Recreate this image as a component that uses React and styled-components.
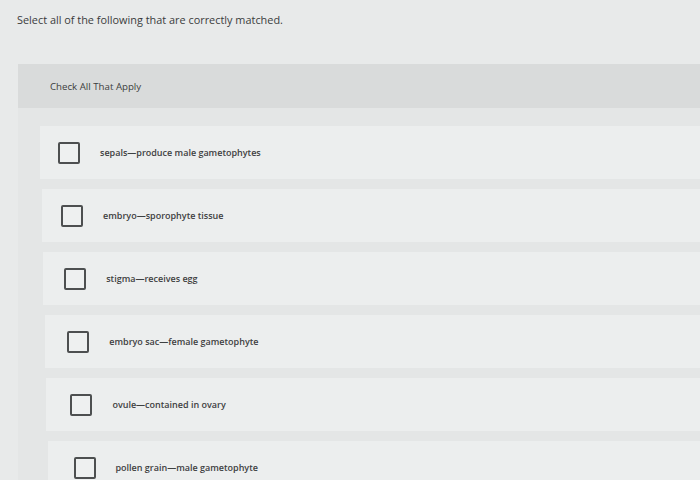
import React from "react";
import styled, { createGlobalStyle } from "styled-components";

const Global = createGlobalStyle`
  html, body { margin: 0; padding: 0; background: #e8eaea; }
  body { font-family: "Open Sans", "Liberation Sans", sans-serif; }
`;

const Page = styled.div`
  width: 700px;
  height: 480px;
  overflow: hidden;
  background: #e8eaea;
  display: flex;
  flex-direction: column;
`;

const Prompt = styled.p`
  margin: 13px 0 0 17px;
  font-size: 10.9px;
  line-height: 14px;
  color: #3a3c3c;
`;

const Card = styled.section`
  margin: 37px 0 0 18px;
  display: flex;
  flex-direction: column;
`;

const CardHeader = styled.div`
  height: 44px;
  background: #d9dbdb;
  display: flex;
  align-items: center;
  padding-left: 32px;
  font-size: 9.7px;
  color: #3c3e3e;
`;

const OptionList = styled.div`
  background: #e4e6e6;
  padding: 18px 0 0 22px;
  display: flex;
  flex-direction: column;
  gap: 10px;
`;

const OptionRow = styled.label`
  height: 53px;
  margin-left: ${(p) => p.$step * 1.5}px;
  padding-left: ${(p) => 18 + p.$step * 1.6}px;
  background: #eceeee;
  display: flex;
  align-items: center;
  gap: 20px;
  cursor: pointer;
`;

const Box = styled.span`
  width: 18px;
  height: 18px;
  border: 2px solid #4d4f50;
  border-radius: 2px;
  background: #eef0f0;
  flex: none;
`;

const OptionText = styled.span`
  font-size: 9px;
  font-weight: 600;
  color: #3e4041;
`;

const options = [
  "sepals\u2014produce male gametophytes",
  "embryo\u2014sporophyte tissue",
  "stigma\u2014receives egg",
  "embryo sac\u2014female gametophyte",
  "ovule\u2014contained in ovary",
  "pollen grain\u2014male gametophyte",
];

export default function App() {
  return (
    <Page>
      <Global />
      <Prompt>Select all of the following that are correctly matched.</Prompt>
      <Card>
        <CardHeader>Check All That Apply</CardHeader>
        <OptionList>
          {options.map((text, i) => (
            <OptionRow key={text} $step={i}>
              <Box />
              <OptionText>{text}</OptionText>
            </OptionRow>
          ))}
        </OptionList>
      </Card>
    </Page>
  );
}
